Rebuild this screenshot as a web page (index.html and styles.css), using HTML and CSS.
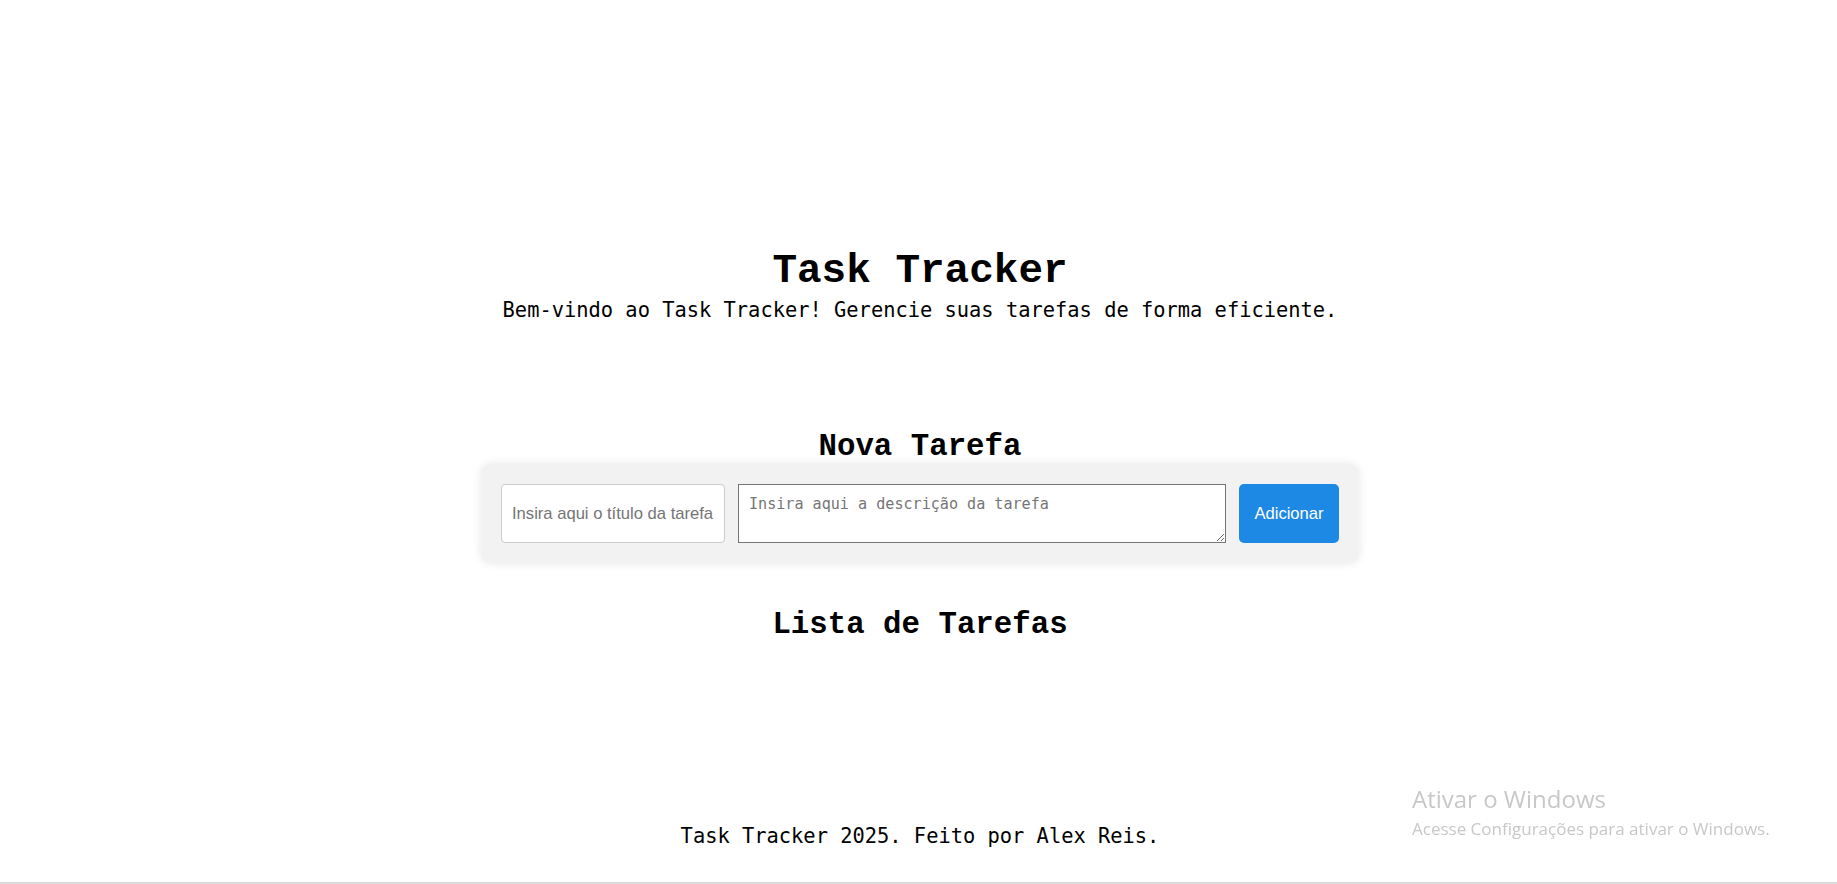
FILE: index.html
```html
<!DOCTYPE html>
<html lang="pt-BR">
<head>
<meta charset="utf-8">
<title>Task Tracker</title>
<link rel="stylesheet" href="styles.css">
</head>
<body>
  <header class="header">
    <h1 class="title">Task Tracker</h1>
    <p class="subtitle">Bem-vindo ao Task Tracker! Gerencie suas tarefas de forma eficiente.</p>
  </header>
  <main class="main">
    <section class="new-task">
      <h2 class="section-title">Nova Tarefa</h2>
      <form class="task-form">
        <input class="task-title" type="text" placeholder="Insira aqui o título da tarefa">
        <textarea class="task-desc" placeholder="Insira aqui a descrição da tarefa"></textarea>
        <button class="add-btn" type="button">Adicionar</button>
      </form>
    </section>
    <section class="task-list">
      <h2 class="section-title">Lista de Tarefas</h2>
    </section>
  </main>
  <footer class="footer">Task Tracker 2025. Feito por Alex Reis.</footer>
  <div class="watermark">
    <div class="wm-title">Ativar o Windows</div>
    <div class="wm-sub">Acesse Configurações para ativar o Windows.</div>
  </div>
  <div class="bottom-edge"></div>
</body>
</html>
```
FILE: styles.css
```css
html, body {
  margin: 0;
  padding: 0;
  background: #ffffff;
  color: #000000;
}

body {
  padding-left: 3px;
  font-family: "DejaVu Sans Mono", "Liberation Mono", monospace;
  font-size: 20.4px;
  text-align: center;
}

.header {
  padding-top: 247px;
}

.title {
  margin: 0;
  font-family: "Liberation Mono", monospace;
  font-weight: bold;
  font-size: 41px;
  line-height: 48px;
}

.subtitle {
  margin: 3px 0 0;
  line-height: 24px;
}

.main {
  margin-top: 108px;
}

.section-title {
  margin: 0;
  font-family: "Liberation Mono", monospace;
  font-weight: bold;
  font-size: 30.75px;
  line-height: 34px;
}

.task-form {
  display: flex;
  align-items: stretch;
  gap: 13px;
  width: fit-content;
  margin: 0 auto;
  padding: 20px;
  background: #f2f2f2;
  border-radius: 10px;
  box-shadow: 0 0 10px rgba(0, 0, 0, 0.1);
}

.task-title {
  box-sizing: border-box;
  width: 224px;
  height: 59px;
  margin: 0;
  padding: 0 10px;
  border: 1px solid #cccccc;
  border-radius: 4px;
  background: #ffffff;
  font-family: "Liberation Sans", Arial, sans-serif;
  font-size: 16.6px;
  color: #000;
}

.task-title::placeholder {
  color: #757575;
}

.task-desc {
  box-sizing: border-box;
  width: 488px;
  height: 59px;
  margin: 0;
  padding: 10px;
  border: 1px solid #767676;
  border-radius: 0;
  background: #ffffff;
  font-family: "DejaVu Sans Mono", monospace;
  font-size: 15.1px;
}

.task-desc::placeholder {
  color: #757575;
}

.add-btn {
  box-sizing: border-box;
  width: 100px;
  height: 59px;
  margin: 0;
  padding: 0;
  border: none;
  border-radius: 5px;
  background: #1e88e5;
  color: #ffffff;
  font-family: "Liberation Sans", Arial, sans-serif;
  font-size: 16.6px;
}

.task-list {
  margin-top: 45px;
}

.footer {
  margin-top: 182px;
  line-height: 24px;
}

.watermark {
  position: fixed;
  left: 1412px;
  top: 784px;
  text-align: left;
  font-family: "Open Sans", "Noto Sans", sans-serif;
  color: #c8c8c8;
  pointer-events: none;
}

.wm-title {
  font-size: 24px;
  line-height: 30px;
}

.wm-sub {
  font-size: 17px;
  line-height: 29px;
}

.bottom-edge {
  position: fixed;
  left: 0;
  right: 0;
  bottom: 0;
  height: 2px;
  background: #dadada;
}
```
